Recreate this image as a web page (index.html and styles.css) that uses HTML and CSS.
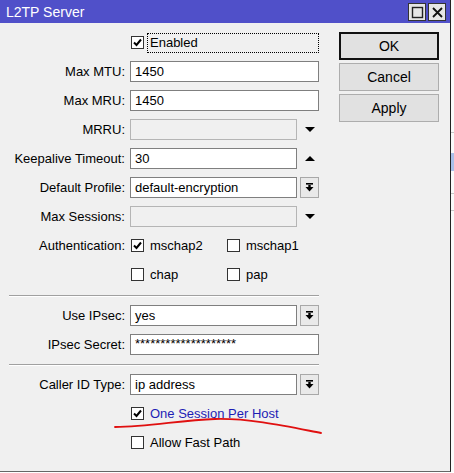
FILE: index.html
```html
<!DOCTYPE html>
<html lang="en">
<head>
  <meta charset="UTF-8">
  <meta name="viewport" content="width=device-width, initial-scale=1.0">
  <title>L2TP Server</title>
  <link rel="stylesheet" href="styles.css">
</head>
<body>
  <div class="window">
    <div class="titlebar">
      <span class="title">L2TP Server</span>
      <div class="title-btns">
        <span class="tbtn">
          <svg width="13" height="13" viewBox="0 0 13 13"><rect x="1.5" y="1.5" width="10" height="10" fill="none" stroke="#222" stroke-width="1.4"/></svg>
        </span>
        <span class="tbtn">
          <svg width="13" height="13" viewBox="0 0 13 13"><path d="M2 2 L11 11 M11 2 L2 11" stroke="#111" stroke-width="1.8"/></svg>
        </span>
      </div>
    </div>

    <div class="content">
      <div class="form">
        <div class="row">
          <span></span>
          <div class="check-group">
            <span class="check on"><svg width="11" height="11" viewBox="0 0 11 11"><path d="M2 5.5 L4.5 8 L9 2.5" fill="none" stroke="#000" stroke-width="2"/></svg></span>
            <span class="focus-label">Enabled</span>
          </div>
        </div>

        <div class="row">
          <label>Max MTU:</label>
          <div class="input">1450</div>
        </div>
        <div class="row">
          <label>Max MRU:</label>
          <div class="input">1450</div>
        </div>
        <div class="row">
          <label>MRRU:</label>
          <div class="field">
            <div class="input short disabled"></div>
            <span class="tri down"></span>
          </div>
        </div>
        <div class="row">
          <label>Keepalive Timeout:</label>
          <div class="field">
            <div class="input short">30</div>
            <span class="tri up"></span>
          </div>
        </div>
        <div class="row">
          <label>Default Profile:</label>
          <div class="field">
            <div class="input short">default-encryption</div>
            <span class="drop"><svg width="11" height="11" viewBox="0 0 11 11"><rect x="2" y="1" width="7" height="1.6" fill="#000"/><path d="M1.5 5 H9.5 L5.5 9.5 Z" fill="#000"/><rect x="4.3" y="3" width="2.4" height="3" fill="#000"/></svg></span>
          </div>
        </div>
        <div class="row">
          <label>Max Sessions:</label>
          <div class="field">
            <div class="input short disabled"></div>
            <span class="tri down"></span>
          </div>
        </div>
        <div class="row">
          <label>Authentication:</label>
          <div class="checks">
            <div class="check-group">
              <span class="check on"><svg width="11" height="11" viewBox="0 0 11 11"><path d="M2 5.5 L4.5 8 L9 2.5" fill="none" stroke="#000" stroke-width="2"/></svg></span>
              <span>mschap2</span>
            </div>
            <div class="check-group">
              <span class="check"></span>
              <span>mschap1</span>
            </div>
          </div>
        </div>
        <div class="row">
          <span></span>
          <div class="checks">
            <div class="check-group">
              <span class="check"></span>
              <span>chap</span>
            </div>
            <div class="check-group">
              <span class="check"></span>
              <span>pap</span>
            </div>
          </div>
        </div>

        <div class="sep"></div>

        <div class="row">
          <label>Use IPsec:</label>
          <div class="field">
            <div class="input short">yes</div>
            <span class="drop"><svg width="11" height="11" viewBox="0 0 11 11"><rect x="2" y="1" width="7" height="1.6" fill="#000"/><path d="M1.5 5 H9.5 L5.5 9.5 Z" fill="#000"/><rect x="4.3" y="3" width="2.4" height="3" fill="#000"/></svg></span>
          </div>
        </div>
        <div class="row">
          <label>IPsec Secret:</label>
          <div class="input secret">********************</div>
        </div>

        <div class="sep sep2"></div>

        <div class="row">
          <label>Caller ID Type:</label>
          <div class="field">
            <div class="input short">ip address</div>
            <span class="drop"><svg width="11" height="11" viewBox="0 0 11 11"><rect x="2" y="1" width="7" height="1.6" fill="#000"/><path d="M1.5 5 H9.5 L5.5 9.5 Z" fill="#000"/><rect x="4.3" y="3" width="2.4" height="3" fill="#000"/></svg></span>
          </div>
        </div>
        <div class="row">
          <span></span>
          <div class="check-group">
            <span class="check on"><svg width="11" height="11" viewBox="0 0 11 11"><path d="M2 5.5 L4.5 8 L9 2.5" fill="none" stroke="#000" stroke-width="2"/></svg></span>
            <span class="link">One Session Per Host</span>
          </div>
        </div>
        <div class="row">
          <span></span>
          <div class="check-group">
            <span class="check"></span>
            <span>Allow Fast Path</span>
          </div>
        </div>
      </div>

      <div class="actions">
        <button class="btn default">OK</button>
        <button class="btn">Cancel</button>
        <button class="btn">Apply</button>
      </div>
    </div>

    <!-- red pen mark under the option -->
    <svg class="scribble" width="450" height="472" viewBox="0 0 450 472">
      <path d="M115 427 C 150 427, 180 420, 215 419 C 250 418, 290 427, 321 433" fill="none" stroke="#e01010" stroke-width="1.8" stroke-linecap="round"/>
    </svg>
  </div>

  <div class="behind">
    <div class="behind-line l1"></div>
    <div class="behind-sel"></div>
    <div class="behind-line l2"></div>
    <div class="behind-line l3"></div>
  </div>
</body>
</html>
```

FILE: styles.css
```css
body {
  margin: 0;
  display: flex;
  font-family: "Liberation Sans", Arial, sans-serif;
  font-size: 13px;
  color: #000;
  background-color: #fff;
}

.window {
  position: relative;
  width: 450px;
  height: 471px;
  background-color: #f0f0f0;
  border-right: 1px solid #222;
  border-bottom: 1px solid #666;
  flex-shrink: 0;
}

.titlebar {
  height: 23px;
  background-color: #5050c9;
  color: #fff;
  display: flex;
  align-items: center;
  justify-content: space-between;
  padding: 0 4px 0 6px;
  font-size: 14px;
}

.title-btns {
  display: flex;
  gap: 2px;
  margin-top: 1px;
}

.tbtn {
  width: 16px;
  height: 16px;
  background-color: #e6e6e6;
  border: 1px solid #333;
  display: flex;
  align-items: center;
  justify-content: center;
}

.content {
  display: flex;
  padding: 5px 0 0 9px;
}

.form {
  width: 310px;
}

.row {
  display: grid;
  grid-template-columns: 116px 189px;
  column-gap: 5px;
  height: 29px;
  align-items: center;
}

.row label {
  text-align: right;
  white-space: nowrap;
}

.input {
  height: 21px;
  box-sizing: border-box;
  border: 1px solid #7f7f7f;
  background-color: #fff;
  padding: 0 4px;
  line-height: 19px;
  white-space: nowrap;
  overflow: hidden;
}

.input.short {
  width: 167px;
}

.input.disabled {
  background-color: #f0f0f0;
  border-color: #b5b5b5;
}

.input.secret {
  line-height: 17px;
}

.field {
  display: flex;
  align-items: center;
}

.drop {
  width: 19px;
  height: 21px;
  margin-left: 3px;
  box-sizing: border-box;
  border: 1px solid #a8a8a8;
  background-color: #e9e9e9;
  display: flex;
  align-items: center;
  justify-content: center;
}

.tri {
  width: 0;
  height: 0;
  margin-left: 8px;
  border-left: 5px solid transparent;
  border-right: 5px solid transparent;
}

.tri.down {
  border-top: 5px solid #000;
}

.tri.up {
  border-bottom: 5px solid #000;
}

.checks {
  display: grid;
  grid-template-columns: 96px auto;
}

.check-group {
  display: flex;
  align-items: center;
}

.check {
  width: 13px;
  height: 13px;
  box-sizing: border-box;
  border: 1px solid #333;
  background-color: #fff;
  margin: 0 6px 0 1px;
  display: flex;
  align-items: center;
  justify-content: center;
}

.focus-label {
  width: 169px;
  height: 18px;
  line-height: 18px;
  padding-left: 2px;
  margin-left: -3px;
  border: 1px dotted #000;
}

.link {
  color: #1d1db5;
}

.sep {
  height: 0;
  border-top: 1px solid #a0a0a0;
  border-bottom: 1px solid #fff;
  margin: 6px 0 4px;
}

.sep2 {
  margin: 5px 0 4px;
}

.actions {
  display: flex;
  flex-direction: column;
  gap: 3px;
  margin: 4px 0 0 20px;
  width: 100px;
}

.btn {
  height: 28px;
  box-sizing: border-box;
  border: 1px solid #adadad;
  background-color: #e1e1e1;
  font-family: "Liberation Sans", Arial, sans-serif;
  font-size: 14px;
  color: #000;
  padding: 0;
}

.btn.default {
  border: 2px solid #111;
}

.scribble {
  position: absolute;
  left: 0;
  top: 0;
  pointer-events: none;
}

.behind {
  flex: 1;
  display: flex;
  flex-direction: column;
  background-color: #fafafa;
}

.behind-line {
  height: 1px;
  background-color: #c8c8c8;
}

.l1 {
  margin-top: 132px;
}

.behind-sel {
  height: 18px;
  margin-top: 20px;
  background-color: #a9c0ea;
}

.l2 {
  margin-top: 22px;
}

.l3 {
  margin-top: 16px;
}
```
